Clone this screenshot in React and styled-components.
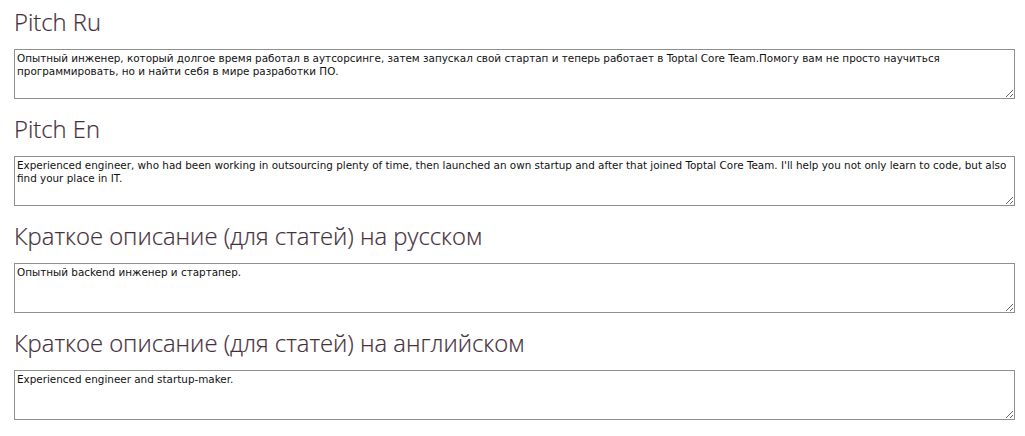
import React from 'react';
import styled, { createGlobalStyle } from 'styled-components';

const Global = createGlobalStyle`
  body {
    margin: 0;
    background: #fff;
  }
`;

const fields = [
  {
    label: 'Pitch Ru',
    value:
      'Опытный инженер, который долгое время работал в аутсорсинге, затем запускал свой стартап и теперь работает в Toptal Core Team.Помогу вам не просто научиться программировать, но и найти себя в мире разработки ПО.',
  },
  {
    label: 'Pitch En',
    value:
      "Experienced engineer, who had been working in outsourcing plenty of time, then launched an own startup and after that joined Toptal Core Team. I'll help you not only learn to code, but also find your place in IT.",
  },
  {
    label: 'Краткое описание (для статей) на русском',
    value: 'Опытный backend инженер и стартапер.',
  },
  {
    label: 'Краткое описание (для статей) на английском',
    value: 'Experienced engineer and startup-maker.',
  },
];

const Page = () => {
  return (
    <Form>
      <Global />
      {fields.map((field) => (
        <Field key={field.label}>
          <Label>{field.label}</Label>
          <TextArea defaultValue={field.value} />
        </Field>
      ))}
    </Form>
  );
};

export default Page;

const Form = styled.div`
  padding: 5px 10px 0 14px;
  display: flex;
  flex-direction: column;
`;

const Field = styled.div`
  display: flex;
  flex-direction: column;
  margin-bottom: 13px;
`;

const Label = styled.h3`
  margin: 0 0 10px;
  font-family: 'Open Sans', sans-serif;
  font-weight: 300;
  font-size: 23.8px;
  line-height: 34px;
  color: #45303c;
  -webkit-text-stroke: 0.2px #45303c;
`;

const TextArea = styled.textarea`
  box-sizing: border-box;
  width: 100%;
  height: 50px;
  margin: 0;
  padding: 2px 1px 2px 2px;
  border: 1px solid #8f8f8f;
  border-radius: 0;
  font-family: 'DejaVu Sans', Verdana, sans-serif;
  font-size: 10.4px;
  line-height: 13px;
  color: #111;
  resize: vertical;
  outline: none;
`;
